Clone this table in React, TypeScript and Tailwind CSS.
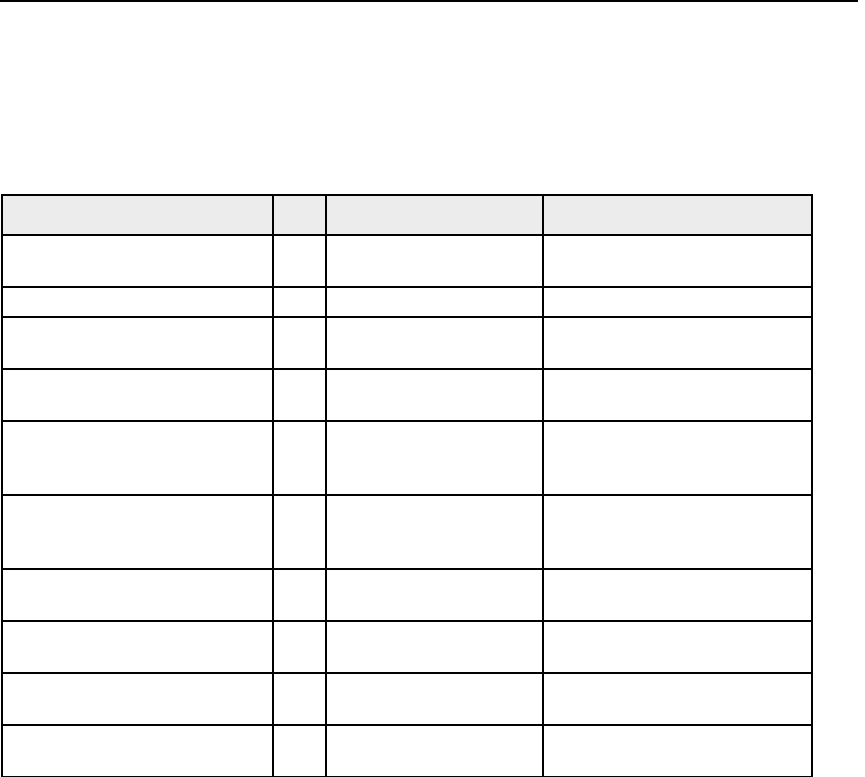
const rows = [52, 30, 52, 52, 74, 74, 52, 52, 52, 52];

const App = () => {
  return (
    <div className="bg-white min-h-[777px] font-['Liberation_Sans',Arial,sans-serif]">
      <div className="h-[2px] w-[858px] bg-black" />
      <table className="mt-[192px] ml-[1px] border-collapse table-fixed w-[810px]">
        <colgroup>
          <col className="w-[271px]" />
          <col className="w-[53px]" />
          <col className="w-[217px]" />
          <col className="w-[269px]" />
        </colgroup>
        <thead>
          <tr className="h-[40px] bg-[#ececec]">
            <th className="border-2 border-black p-0" />
            <th className="border-2 border-black p-0" />
            <th className="border-2 border-black p-0" />
            <th className="border-2 border-black p-0" />
          </tr>
        </thead>
        <tbody>
          {rows.map((h, i) => (
            <tr key={i} style={{ height: h }}>
              <td className="border-2 border-black p-0" />
              <td className="border-2 border-black p-0" />
              <td className="border-2 border-black p-0" />
              <td className="border-2 border-black p-0" />
            </tr>
          ))}
        </tbody>
      </table>
    </div>
  );
};

export default App;
